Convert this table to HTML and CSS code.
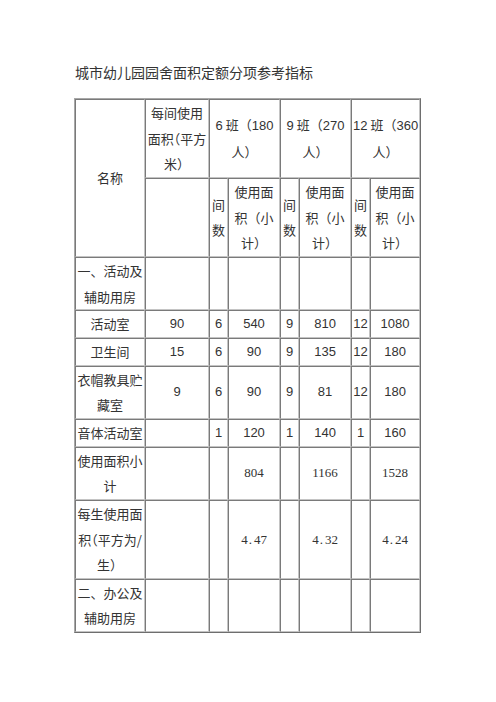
FILE: index.html
```html
<!DOCTYPE html>
<html lang="zh">
<head>
<meta charset="utf-8">
<link rel="stylesheet" href="styles.css">
</head>
<body>
<div class="page">
  <h1 class="title">城市幼儿园园舍面积定额分项参考指标</h1>
  <table class="grid">
    <colgroup>
      <col class="c-name"><col class="c-per"><col class="c-n"><col class="c-a"><col class="c-n"><col class="c-a"><col class="c-n"><col class="c-a2">
    </colgroup>
    <tr>
      <td rowspan="2">名称</td>
      <td>每间使用<br><span class="h">面积（平方</span><br>米）</td>
      <td colspan="2"><span class="num">6</span> 班（<span class="num">180</span><br>人）</td>
      <td colspan="2"><span class="num">9</span> 班（<span class="num">270</span><br>人）</td>
      <td colspan="2"><span class="num">12</span> 班（<span class="num">360</span><br>人）</td>
    </tr>
    <tr>
      <td></td>
      <td>间<br>数</td>
      <td>使用面<br>积（小<br>计）</td>
      <td>间<br>数</td>
      <td>使用面<br>积（小<br>计）</td>
      <td>间<br>数</td>
      <td>使用面<br>积（小<br>计）</td>
    </tr>
    <tr>
      <td>一、活动及<br>辅助用房</td>
      <td></td><td></td><td></td><td></td><td></td><td></td><td></td>
    </tr>
    <tr class="num">
      <td class="cjk">活动室</td><td>90</td><td>6</td><td>540</td><td>9</td><td>810</td><td>12</td><td>1080</td>
    </tr>
    <tr class="num">
      <td class="cjk">卫生间</td><td>15</td><td>6</td><td>90</td><td>9</td><td>135</td><td>12</td><td>180</td>
    </tr>
    <tr class="num">
      <td class="cjk">衣帽教具贮<br>藏室</td><td>9</td><td>6</td><td>90</td><td>9</td><td>81</td><td>12</td><td>180</td>
    </tr>
    <tr class="num">
      <td class="cjk">音体活动室</td><td></td><td>1</td><td>120</td><td>1</td><td>140</td><td>1</td><td>160</td>
    </tr>
    <tr>
      <td>使用面积小<br>计</td><td></td><td></td><td class="ser">804</td><td></td><td class="ser">1166</td><td></td><td class="ser">1528</td>
    </tr>
    <tr>
      <td>每生使用面<br><span class="h">积（平方为/</span><br>生）</td><td></td><td></td><td class="ser">4<span class="dot">.</span>47</td><td></td><td class="ser">4<span class="dot">.</span>32</td><td></td><td class="ser">4<span class="dot">.</span>24</td>
    </tr>
    <tr>
      <td>二、办公及<br>辅助用房</td>
      <td></td><td></td><td></td><td></td><td></td><td></td><td></td>
    </tr>
  </table>
</div>
</body>
</html>
```
FILE: styles.css
```css
html, body {
  margin: 0;
  padding: 0;
  background: #ffffff;
}
body {
  font-family: "Noto Sans CJK SC", sans-serif;
  color: #333333;
}
.page {
  padding: 60px 0 0 74px;
}
.title {
  margin: 0 0 14px 1px;
  font-size: 14px;
  font-weight: normal;
  line-height: 24px;
  color: #333333;
}
.grid {
  width: 347px;
  table-layout: fixed;
  border-collapse: separate;
  border-spacing: 0;
  border: 1px solid;
  border-color: #a8a8a8 #6e6e6e #6e6e6e #a8a8a8;
  font-size: 13px;
  line-height: 25.65px;
}
.c-name { width: 70px; }
.c-per { width: 64px; }
.c-n { width: 19px; }
.c-a { width: 52px; }
.c-a2 { width: 50px; }
.grid td {
  border: 1px solid;
  border-color: #7a7a7a #c4c4c4 #c4c4c4 #7a7a7a;
  padding: 0 1px;
  text-align: center;
  vertical-align: middle;
  white-space: nowrap;
  overflow: visible;
}
.num, tr.num td {
  font-family: "Liberation Sans", sans-serif;
}
tr.num td.cjk {
  font-family: "Noto Sans CJK SC", sans-serif;
}
.ser {
  font-family: "Liberation Serif", serif;
}
.dot {
  padding: 0 2px 0 1px;
}
.h {
  font-feature-settings: "halt";
}
```
